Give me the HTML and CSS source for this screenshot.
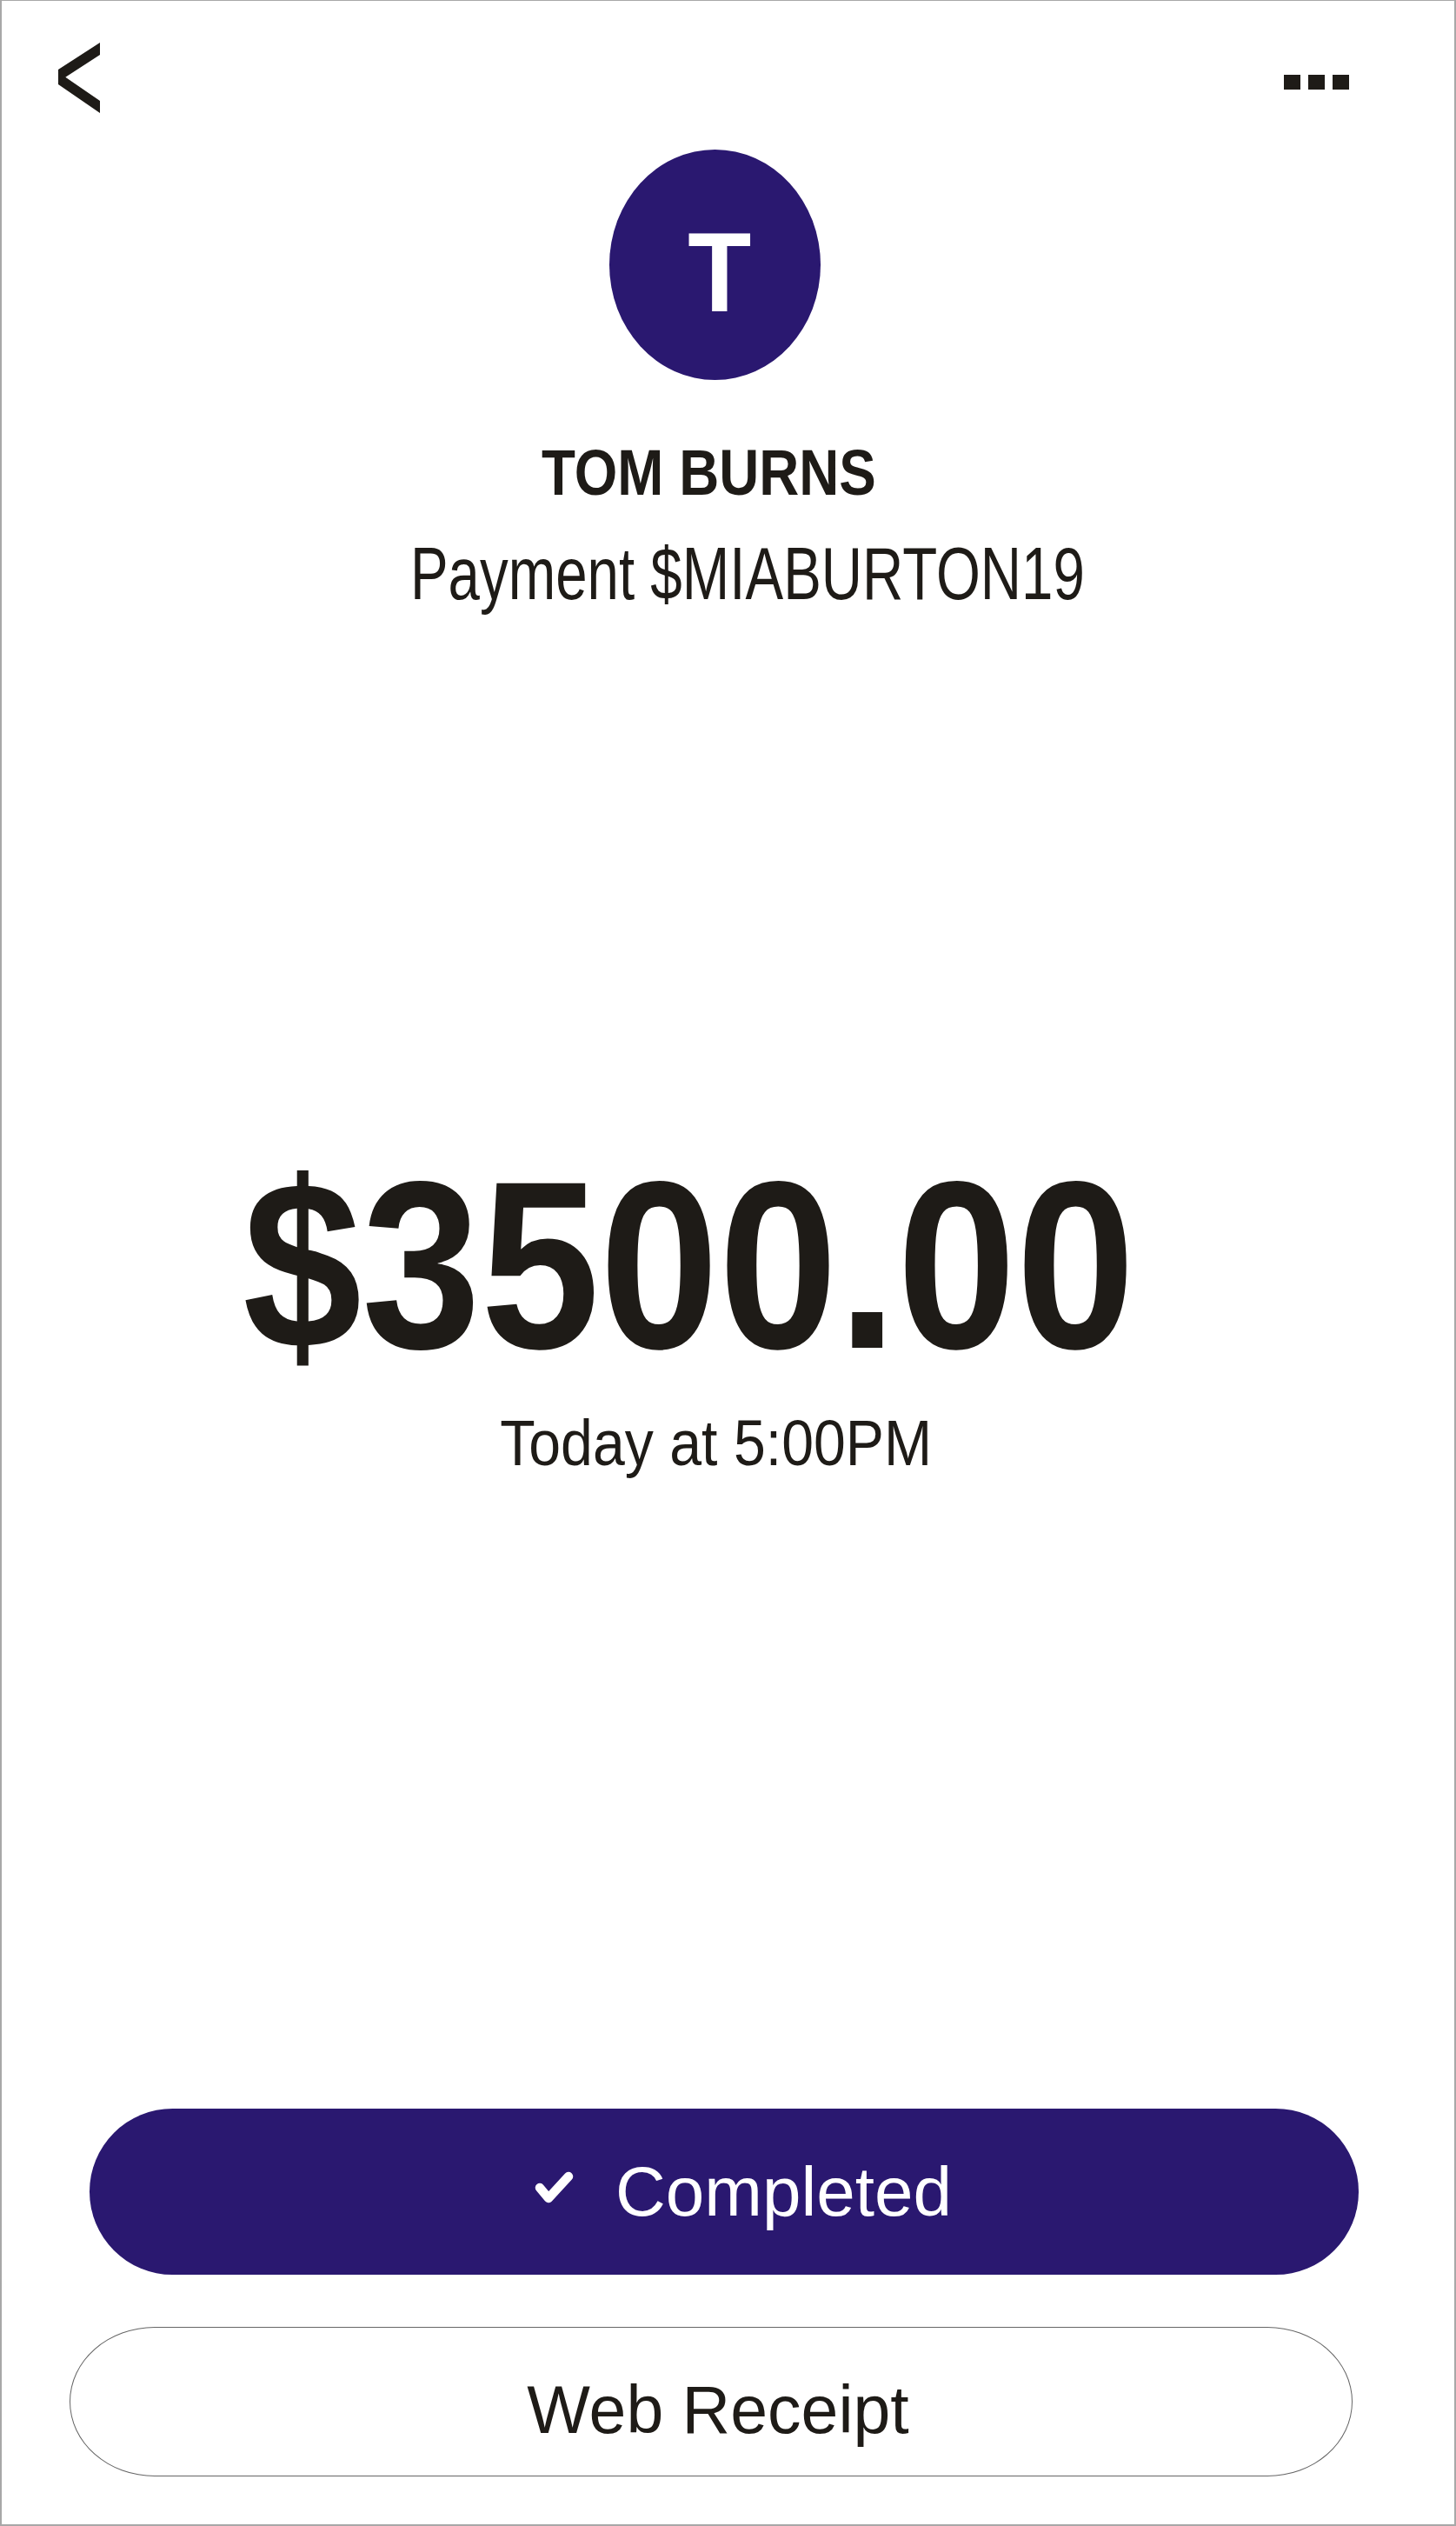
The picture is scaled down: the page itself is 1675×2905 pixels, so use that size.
FILE: index.html
```html
<!DOCTYPE html>
<html lang="en">
<head>
<meta charset="utf-8">
<title>Payment</title>
<link rel="stylesheet" href="styles.css">
</head>
<body>
<div class="screen">
  <header class="topbar">
    <svg class="back" width="48" height="81" viewBox="0 0 48 81" aria-label="Back">
      <polygon points="48,0 0,31 0,48 48,81 48,67 8.3,39.7 48,14" fill="#1e1b17"/>
    </svg>
    <svg class="more" width="75" height="17" viewBox="0 0 75 17" aria-label="More">
      <rect x="0" y="0" width="19" height="17" fill="#1e1b17"/>
      <rect x="28" y="0" width="19" height="17" fill="#1e1b17"/>
      <rect x="56" y="0" width="19" height="17" fill="#1e1b17"/>
    </svg>
  </header>

  <main class="details">
    <div class="avatar"><span class="avatar-letter">T</span></div>
    <div class="name">TOM BURNS</div>
    <div class="handle">Payment $MIABURTON19</div>
    <div class="amount">$3500.00</div>
    <div class="time">Today at 5:00PM</div>
  </main>

  <div class="spacer"></div>

  <div class="actions">
    <div class="btn btn-completed">
      <svg class="check" width="45" height="38" viewBox="0 0 45 38">
        <path d="M6 19 L16 31 L39 6" fill="none" stroke="#ffffff" stroke-width="10.5" stroke-linecap="round" stroke-linejoin="round"/>
      </svg>
      <span class="btn-label">Completed</span>
    </div>
    <div class="btn btn-receipt">
      <span class="btn-label">Web Receipt</span>
    </div>
  </div>
</div>
</body>
</html>
```

FILE: styles.css
```css
html, body {
  margin: 0;
  padding: 0;
  background: #ffffff;
}

.screen {
  width: 1675px;
  height: 2905px;
  box-sizing: border-box;
  border: 2px solid #a8a8a8;
  border-top-width: 1px;
  display: flex;
  flex-direction: column;
  font-family: "Liberation Sans", Arial, sans-serif;
  color: #1e1b17;
  background: #ffffff;
  overflow: hidden;
}

.topbar {
  display: flex;
  justify-content: space-between;
  align-items: flex-start;
  padding: 48px 121px 0 65px;
}

.back {
  display: block;
}

.more {
  display: block;
  margin-top: 37px;
}

.details {
  display: flex;
  flex-direction: column;
  align-items: center;
}

.avatar {
  width: 243px;
  height: 265px;
  box-sizing: border-box;
  border-radius: 50%;
  background: #2a1870;
  margin-top: 42px;
  margin-right: 30px;
  display: flex;
  align-items: center;
  justify-content: center;
  padding: 17px 0 0 10px;
}

.avatar-letter {
  display: block;
  color: #ffffff;
  font-size: 130px;
  font-weight: bold;
  line-height: 130px;
  transform: scaleX(0.92);
}

.name {
  margin-top: 61px;
  margin-right: 45px;
  font-size: 75px;
  font-weight: bold;
  line-height: 90px;
  white-space: nowrap;
  transform: scaleX(0.85);
}

.handle {
  margin-top: 22px;
  margin-left: 44px;
  font-size: 85px;
  line-height: 100px;
  white-space: nowrap;
  transform: scaleX(0.77);
}

.amount {
  margin-top: 595px;
  margin-right: 90px;
  font-size: 275px;
  font-weight: bold;
  line-height: 300px;
  white-space: nowrap;
  transform: scaleX(0.895);
}

.time {
  margin-top: 10px;
  margin-right: 28px;
  font-size: 74px;
  line-height: 90px;
  white-space: nowrap;
  transform: scaleX(0.895);
}

.spacer {
  flex: 1;
}

.actions {
  display: flex;
  flex-direction: column;
  padding-bottom: 55px;
}

.btn {
  display: flex;
  align-items: center;
  justify-content: center;
  box-sizing: border-box;
}

.btn-label {
  line-height: 80px;
  white-space: nowrap;
}

.btn-completed {
  margin-left: 101px;
  width: 1460px;
  height: 191px;
  border-radius: 96px;
  background: #2a1870;
  color: #ffffff;
  padding-left: 44px;
  font-size: 80px;
}

.check {
  display: block;
  margin-right: 48px;
  margin-bottom: 9px;
}

.btn-receipt {
  margin-top: 60px;
  margin-left: 78px;
  width: 1476px;
  height: 172px;
  border: 1.5px solid #666666;
  border-radius: 98px / 86px;
  padding: 18px 0 0 16px;
  color: #1e1b17;
  font-size: 77px;
}
```
